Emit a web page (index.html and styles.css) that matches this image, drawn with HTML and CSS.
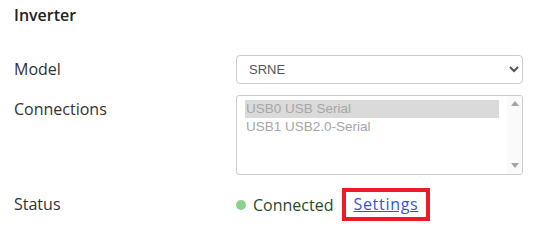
FILE: index.html
```html
<!DOCTYPE html>
<html lang="en">
<head>
  <meta charset="UTF-8">
  <title>Inverter</title>
  <link rel="stylesheet" href="styles.css">
</head>
<body>

  <div class="panel">
    <h3 class="title">Inverter</h3>

    <div class="form">
      <label class="label" for="model">Model</label>
      <select class="model" id="model">
        <option>SRNE</option>
      </select>

      <label class="label" for="conn">Connections</label>
      <div class="listbox" id="conn">
        <div class="items">
          <div class="item selected">USB0 USB Serial</div>
          <div class="item">USB1 USB2.0-Serial</div>
        </div>
        <div class="scrollbar">
          <span class="arrow up"></span>
          <span class="arrow down"></span>
        </div>
      </div>

      <div class="label status-label">Status</div>
      <div class="status">
        <span class="dot"></span>
        <span class="state">Connected</span>
        <span class="highlight"><a href="#" class="link">Settings</a></span>
      </div>
    </div>
  </div>

</body>
</html>
```

FILE: styles.css
```css
* {
  box-sizing: border-box;
}

body {
  margin: 0;
  background: #fff;
  font-family: "Open Sans", "Noto Sans", sans-serif;
  color: #222;
}

.panel {
  padding: 4px 18px 0 14px;
}

.title {
  margin: 0;
  font-size: 16px;
  font-weight: 600;
  line-height: 22px;
  color: #222;
}

.form {
  display: grid;
  grid-template-columns: 222px 287px;
  row-gap: 11px;
  margin-top: 29px;
}

.label {
  font-size: 16px;
  line-height: 29px;
  color: #333;
}

.model {
  height: 29px;
  width: 287px;
  border: 1px solid #ccc;
  border-radius: 4px;
  background: #fff;
  font-family: "Liberation Sans", Arial, sans-serif;
  font-size: 13px;
  color: #555;
  padding: 0 8px;
}

.listbox {
  display: flex;
  height: 80px;
  border: 1px solid #ccc;
  border-radius: 3px;
  overflow: hidden;
}

.items {
  flex: 1;
  padding: 4px 8px 0 8px;
  font-family: "Liberation Sans", Arial, sans-serif;
  font-size: 13.5px;
  color: #a6a6a6;
}

.item {
  line-height: 18px;
  padding-left: 1px;
}

.item.selected {
  background: #dadada;
}

.scrollbar {
  width: 15px;
  background: #fafafa;
  display: flex;
  flex-direction: column;
  justify-content: space-between;
  align-items: center;
  padding: 5px 0 6px;
}

.arrow {
  width: 0;
  height: 0;
  border-left: 4px solid transparent;
  border-right: 4px solid transparent;
}

.arrow.up {
  border-bottom: 5px solid #a3a3a3;
}

.arrow.down {
  border-top: 5px solid #a3a3a3;
}

.status-label {
  margin-top: 2px;
  line-height: 33px;
}

.status {
  display: flex;
  align-items: center;
  margin-top: 2px;
  height: 33px;
  font-size: 16px;
}

.dot {
  width: 10px;
  height: 10px;
  border-radius: 50%;
  background: #8ad18c;
  margin-right: 7px;
}

.state {
  color: #1f4d2a;
}

.highlight {
  margin-left: 9px;
  height: 33px;
  border: 4px solid #ed1c24;
  padding: 0 8px 0 7px;
  line-height: 25px;
}

.link {
  color: #3355dd;
  letter-spacing: 0.7px;
}
```
